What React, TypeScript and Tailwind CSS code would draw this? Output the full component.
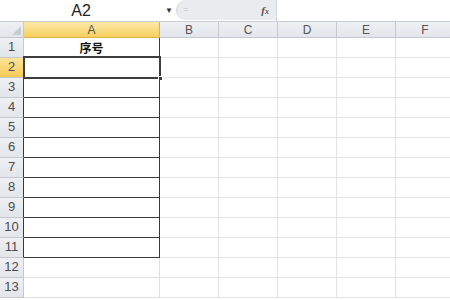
const cols = ["B", "C", "D", "E", "F"];
const rows = [1, 2, 3, 4, 5, 6, 7, 8, 9, 10, 11, 12, 13];

function RowHead({ n, active, edge }: { n: number; active?: boolean; edge?: boolean }) {
  return (
    <div
      className={
        "w-[24px] shrink-0 flex items-end justify-center pb-[1px] text-[13px] text-[#4d4d4d] border-r border-b border-[#c5c9cf] " +
        (edge ? "border-r-[#3a3a3a] " : "") +
        (active
          ? "bg-gradient-to-b from-[#fbe39a] to-[#f6cb53]"
          : "bg-gradient-to-b from-[#eef0f3] to-[#e2e5ea]")
      }
    >
      {n}
    </div>
  );
}

export default function App() {
  return (
    <div className="w-[450px] h-[300px] overflow-hidden bg-white font-['Liberation_Sans',sans-serif] select-none">
      {/* formula bar */}
      <div className="flex h-[22px] border-b border-[#c9cdd2] bg-white">
        <div className="w-[162px] shrink-0 flex items-center justify-center text-[16px] text-[#222]">
          A2
        </div>
        <div className="w-[14px] shrink-0 flex items-center justify-center text-[8px] text-[#333]">
          ▼
        </div>
        <div className="w-[100px] shrink-0 h-[20px] flex items-center justify-between pl-[6px] pr-[7px] bg-[#e9ebee] rounded-bl-[14px] rounded-tl-[14px] border-l border-[#d4d7db]">
          <span className="text-[9px] text-[#c2c4c8]">=</span>
          <span className="text-[11px] italic font-bold font-['Liberation_Serif',serif] text-[#555]">
            f<span className="text-[8px]">x</span>
          </span>
        </div>
        <div className="flex-1 border-l border-[#d4d7db] bg-white" />
      </div>

      {/* column headers */}
      <div className="flex h-[16px]">
        <div className="w-[24px] shrink-0 relative bg-gradient-to-b from-[#eef0f3] to-[#e2e5ea] border-r border-b border-[#c5c9cf]">
          <svg className="absolute right-[2px] bottom-[2px]" width="9" height="9" viewBox="0 0 9 9">
            <polygon points="9,0 9,9 0,9" fill="#c8ccd2" />
          </svg>
        </div>
        <div className="w-[136px] shrink-0 flex items-center justify-center text-[12px] text-[#555] bg-gradient-to-b from-[#fde9a8] to-[#f7cf5c] border-r border-b border-[#d9b44a]">
          A
        </div>
        {cols.map((c) => (
          <div
            key={c}
            className="w-[59px] shrink-0 flex items-center justify-center text-[12px] text-[#555] bg-gradient-to-b from-[#eef0f3] to-[#e2e5ea] border-r border-b border-[#c5c9cf]"
          >
            {c}
          </div>
        ))}
      </div>

      {/* rows */}
      {rows.map((r) => {
        const inTable = r <= 11;
        return (
          <div key={r} className="flex h-[20px]">
            <RowHead n={r} active={r === 2} edge={r >= 2 && r <= 11} />
            <div
              className={
                "w-[136px] shrink-0 relative flex items-center justify-center border-b border-r " +
                (inTable ? "border-[#3a3a3a]" : "border-[#dde0e3]")
              }
            >
              {r === 1 && (
                <span className="text-[12px] font-bold text-[#111] font-['Noto_Sans_CJK_SC',sans-serif]">
                  序号
                </span>
              )}
              {r === 2 && (
                <div className="absolute left-[-1px] top-[-2px] right-[-2px] bottom-[-2px] border-2 border-[#3d3d3d]">
                  <div className="absolute right-[-4px] bottom-[-4px] w-[5px] h-[5px] bg-[#3d3d3d] border border-white" />
                </div>
              )}
            </div>
            {cols.map((c) => (
              <div
                key={c}
                className="w-[59px] shrink-0 border-r border-b border-[#e1e3e6]"
              />
            ))}
          </div>
        );
      })}
    </div>
  );
}
